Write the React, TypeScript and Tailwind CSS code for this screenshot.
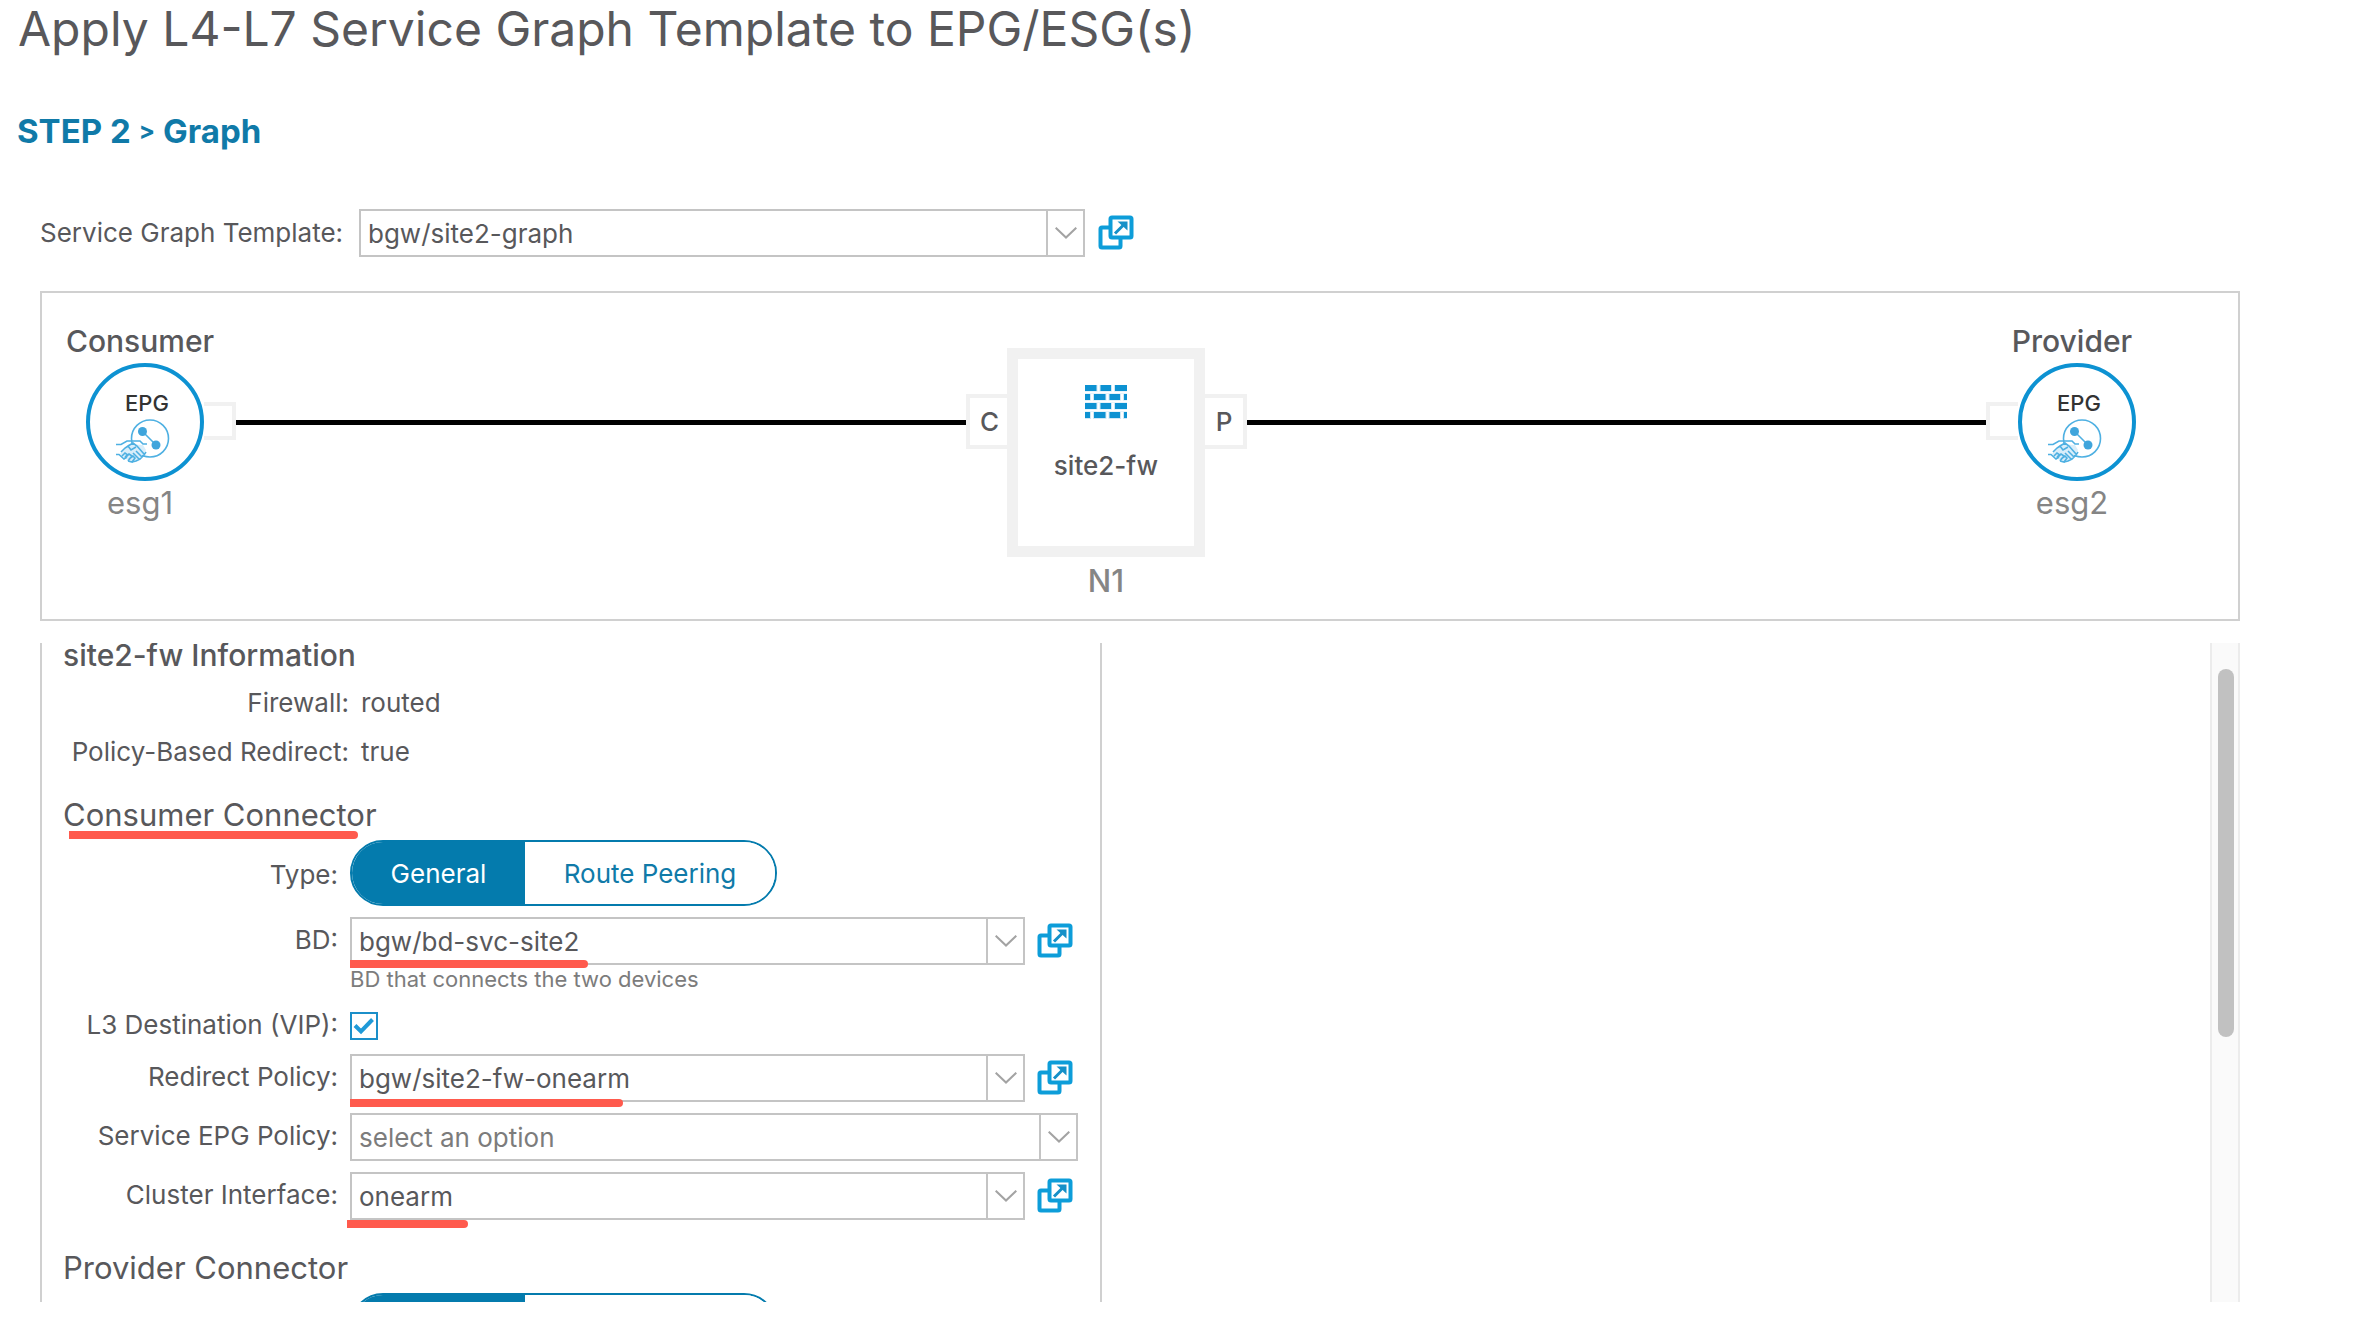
import type { ReactNode } from "react";

interface ComboProps {
  id: string;
  value: string;
  muted?: boolean;
  mark?: string;
}

function Combo({ id, value, muted = false, mark }: ComboProps) {
  return (
    <div className="relative h-12 min-w-0 flex-1">
      <select
        id={id}
        defaultValue={value}
        className={`block h-full w-full appearance-none rounded-none border-2 border-[#c4c4c4] bg-white pl-[7px] pr-12 text-[26px] outline-none ${
          muted ? "text-[#7c7c7c]" : "text-[#58585b]"
        }`}
      >
        <option value={value}>{value}</option>
      </select>
      <span className="pointer-events-none absolute inset-y-0 right-0 flex w-[39px] items-center justify-center border-2 border-[#c4c4c4]">
        <svg width="22" height="12" viewBox="0 0 22 12" fill="none" stroke="#a3a3a3" strokeWidth="2">
          <path d="M0.7 0.7 L11 10.5 L21.3 0.7" />
        </svg>
      </span>
      {mark && <span className={`absolute h-2 rounded-r-full bg-[#ff5a4d] ${mark}`} />}
    </div>
  );
}

function OpenButton({ label }: { label: string }) {
  return (
    <button type="button" aria-label={label} className="shrink-0">
      <svg width="36" height="36" viewBox="0 0 36 36" fill="none">
        <rect x="2.5" y="12.5" width="20" height="20" rx="1.5" fill="#fff" stroke="#0d9dd9" strokeWidth="4" />
        <rect x="12.5" y="2.5" width="21" height="20" rx="1.5" fill="#fff" stroke="#0d9dd9" strokeWidth="4" />
        <path d="M17 18.5 L26 9.5" stroke="#1590c8" strokeWidth="3" />
        <path d="M19.5 6.5 H29.5 V15.5 Z" fill="#1590c8" />
      </svg>
    </button>
  );
}

function Field({ id, label, children }: { id: string; label: string; children: ReactNode }) {
  return (
    <div className="flex items-center gap-3">
      <label htmlFor={id} className="w-[275px] shrink-0 whitespace-nowrap pb-[2px] text-right leading-8">
        {label}
      </label>
      {children}
    </div>
  );
}

function TypeToggle({ label }: { label: string }) {
  return (
    <div role="group" aria-label={label} className="flex h-[66px] overflow-hidden rounded-full border-2 border-[#047bad]">
      <button type="button" aria-pressed="true" className="w-[173px] bg-[#047bad] text-white">
        General
      </button>
      <button type="button" aria-pressed="false" className="w-[250px] bg-white text-[#107aa8]">
        Route Peering
      </button>
    </div>
  );
}

function EpgIcon() {
  return (
    <svg width="54" height="44" viewBox="0 0 54 44" fill="none" stroke="#4eb0e2" strokeWidth="1.6" className="mr-1">
      <circle cx="34" cy="19.5" r="18.5" />
      <path d="M26.5 12.5 L40 26" />
      <circle cx="26.5" cy="12.5" r="4.5" fill="#3fa5dc" stroke="none" />
      <circle cx="40" cy="26" r="4.5" fill="#3fa5dc" stroke="none" />
      <path d="M4 35 L13 25 L27 26 L30 31 L22 42 L14 43 Z" fill="#d9eefa" stroke="none" />
      <path d="M0 25.5 H5 L11 22 H24 L27 25 H31" />
      <path d="M0 35.5 H3 L8 40 L11 38 M6 37 L9 34 L12 36 L8 40 M9 38 L13 35 L16 37 L12 42 M13 40 L17 37 L19 39 L16 43 L12 42" />
      <path d="M16 43 L20 42 L24 40 L28 36 L30 33 M5 33 L9 29 L12 27 L17 24 L21 27 L28 35 M12 27 L15 31 L20 28 M20 32 L26 38 M17 34 L23 40" />
    </svg>
  );
}

function EpgNode({ role, name }: { role: string; name: string }) {
  return (
    <div className="mt-[30px] flex w-[118px] flex-col items-center gap-1">
      <span className="mr-[10px] whitespace-nowrap text-[30px] font-medium leading-9">{role}</span>
      <div className="flex h-[118px] w-[118px] flex-col items-center rounded-full border-4 border-[#0d92d2] bg-white pt-6">
        <span className="ml-1 text-[22px] font-medium leading-6 text-[#333333]">EPG</span>
        <div className="mt-1">
          <EpgIcon />
        </div>
      </div>
      <span className="mr-[10px] text-[31px] leading-9 text-[#858585]">{name}</span>
    </div>
  );
}

function FirewallIcon() {
  return (
    <svg width="42" height="34" viewBox="0 0 42 34" fill="#0d92d2">
      <rect width="42" height="34" fill="#cfe8f6" />
      <path
        d="M0 7.5 H42 M0 16.5 H42 M0 25.5 H42 M13.5 0 V7 M28 0 V7 M7 9 V16 M22.5 9 V16 M37 9 V16 M13.5 18 V25 M28 18 V25 M7 27 V34 M22.5 27 V34 M37 27 V34"
        stroke="#fff"
        strokeWidth="2"
      />
      <path d="M0 0 H11.5 V6 H0 Z M15.5 0 H26 V6 H15.5 Z M30 0 H42 V6 H30 Z" />
      <path d="M0 9 H5 V15 H0 Z M9 9 H20.5 V15 H9 Z M24.5 9 H35 V15 H24.5 Z M39 9 H42 V15 H39 Z" />
      <path d="M0 18 H11.5 V24 H0 Z M15.5 18 H26 V24 H15.5 Z M30 18 H42 V24 H30 Z" />
      <path d="M0 27 H5 V33 H0 Z M9 27 H20.5 V33 H9 Z M24.5 27 H35 V33 H24.5 Z M39 27 H42 V33 H39 Z" />
    </svg>
  );
}

function ServiceGraph() {
  return (
    <section
      aria-label="Service graph"
      className="mt-[34px] flex h-[330px] items-start border-2 border-[#d0d0d0] pl-11 pr-[102px]"
    >
      <EpgNode role="Consumer" name="esg1" />
      <div className="mt-[109px] h-[38px] w-8 border-4 border-l-0 border-[#f1f1f1]" />
      <div className="mt-[127px] h-[5px] flex-[730] bg-black" />
      <div className="mt-[101px] flex h-[55px] w-[41px] items-center justify-center border-4 border-r-0 border-[#f1f1f1] pl-[2px] font-medium">
        C
      </div>
      <div className="mt-[55px] flex w-[198px] flex-col items-center gap-[6px]">
        <div className="flex h-[209px] w-full flex-col items-center border-[11px] border-[#f1f1f1] bg-white pt-[26px]">
          <FirewallIcon />
          <span className="mt-[31px] font-medium leading-8">site2-fw</span>
        </div>
        <span className="text-[31px] font-medium leading-9 text-[#858585]">N1</span>
      </div>
      <div className="mt-[101px] flex h-[55px] w-[42px] items-center justify-center border-4 border-l-0 border-[#f1f1f1] font-medium">
        P
      </div>
      <div className="mt-[127px] h-[5px] flex-[739] bg-black" />
      <div className="mt-[109px] h-[38px] w-8 border-4 border-r-0 border-[#f1f1f1]" />
      <EpgNode role="Provider" name="esg2" />
    </section>
  );
}

const INFO = [
  { label: "Firewall:", value: "routed" },
  { label: "Policy-Based Redirect:", value: "true" },
];

function ConnectorPanel() {
  return (
    <div className="min-h-0 overflow-hidden border-x-2 border-[#d0d0d0] pl-[21px] pr-[22px]">
      <h3 className="text-[30px] font-medium leading-6">site2-fw Information</h3>

      <dl className="mt-5 flex flex-col gap-[17px]">
        {INFO.map((row) => (
          <div key={row.label} className="flex gap-3 leading-8">
            <dt className="w-[286px] whitespace-nowrap text-right">{row.label}</dt>
            <dd>{row.value}</dd>
          </div>
        ))}
      </dl>

      <h4 className="relative mt-[31px] text-[31px] leading-8">
        Consumer Connector
        <span className="absolute left-[6px] top-[32px] h-2 w-[289px] rounded-r-full bg-[#ff5a4d]" />
      </h4>

      <div className="mt-[9px] flex items-center gap-3">
        <span className="w-[275px] pt-1 text-right leading-8">Type:</span>
        <TypeToggle label="Consumer type" />
      </div>

      <div className="mt-[11px]">
        <Field id="bd" label="BD:">
          <Combo id="bd" value="bgw/bd-svc-site2" mark="-bottom-[3px] left-0 w-[238px]" />
          <div className="flex w-[41px] shrink-0">
            <OpenButton label="Open BD" />
          </div>
        </Field>
      </div>
      <p className="ml-[287px] text-[22px] leading-7 text-[#7c7c7c]">BD that connects the two devices</p>

      <div className="mt-[16px]">
        <Field id="vip" label="L3 Destination (VIP):">
          <span className="relative h-7 w-7">
            <input
              id="vip"
              type="checkbox"
              defaultChecked
              className="block h-7 w-7 appearance-none border-2 border-[#1b8fc9] bg-white"
            />
            <svg
              width="28"
              height="28"
              viewBox="0 0 28 28"
              fill="none"
              stroke="#1f9ad8"
              strokeWidth="4"
              className="pointer-events-none absolute inset-0"
            >
              <path d="M5 13.5 L11 19.5 L22.5 7.5" />
            </svg>
          </span>
        </Field>
      </div>

      <div className="mt-[11px] flex flex-col gap-[11px]">
        <Field id="redirect" label="Redirect Policy:">
          <Combo id="redirect" value="bgw/site2-fw-onearm" mark="-bottom-[5px] left-0 w-[273px]" />
          <div className="flex w-[41px] shrink-0">
            <OpenButton label="Open redirect policy" />
          </div>
        </Field>
        <Field id="epg-policy" label="Service EPG Policy:">
          <Combo id="epg-policy" value="select an option" muted />
        </Field>
        <Field id="cluster" label="Cluster Interface:">
          <Combo id="cluster" value="onearm" mark="-bottom-[8px] -left-[3px] w-[121px]" />
          <div className="flex w-[41px] shrink-0">
            <OpenButton label="Open cluster interface" />
          </div>
        </Field>
      </div>

      <h4 className="mt-8 text-[31px] leading-8">Provider Connector</h4>
      <div className="ml-[287px] mt-[9px] flex">
        <TypeToggle label="Provider type" />
      </div>
    </div>
  );
}

export default function App() {
  return (
    <main className="flex h-screen flex-col overflow-hidden bg-white pb-[38px] pl-10 pr-[120px] font-['Inter',sans-serif] text-[26px] text-[#58585b]">
      <h1 className="-ml-[22px] text-[48px] leading-[57px]">Apply L4-L7 Service Graph Template to EPG/ESG(s)</h1>
      <h2 className="-ml-[23px] mt-[54px] flex items-center gap-2 text-[33px] font-bold leading-10 text-[#107aa8]">
        STEP 2 <span className="text-[24px]">&gt;</span> Graph
      </h2>

      <div className="mt-[58px] flex items-center">
        <label htmlFor="template" className="w-[319px] shrink-0 whitespace-nowrap leading-8">
          Service Graph Template:
        </label>
        <div className="flex w-[726px]">
          <Combo id="template" value="bgw/site2-graph" />
        </div>
        <div className="ml-[13px] flex">
          <OpenButton label="Open service graph template" />
        </div>
      </div>

      <ServiceGraph />

      <div className="mt-[22px] grid min-h-0 flex-1 grid-cols-[1062fr_1108fr_30px] grid-rows-[minmax(0,1fr)]">
        <ConnectorPanel />
        <div />
        <div className="border-x-2 border-[#ececec] bg-[#fafafa] px-[6px] pt-[26px]">
          <div className="h-[368px] w-4 rounded-full bg-[#c1c1c1]" />
        </div>
      </div>
    </main>
  );
}
